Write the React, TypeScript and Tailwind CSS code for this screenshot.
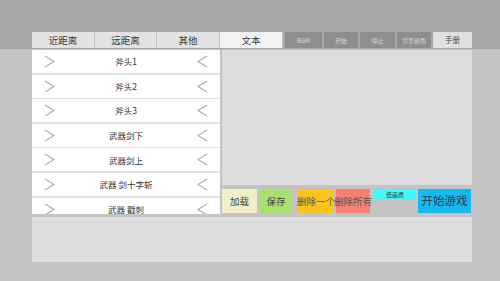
const font = { fontFamily: '"Noto Sans CJK SC", "Noto Sans", sans-serif' };

const mainTabs = [
  { label: '近距离', w: 'w-[63px]', active: false },
  { label: '远距离', w: 'w-[62px]', active: false },
  { label: '其他', w: 'w-[63px]', active: false },
  { label: '文本', w: 'w-[63px]', active: true },
];

const smallTabs = [
  { label: 'BGM', w: 'w-[37px]' },
  { label: '开始', w: 'w-[34px]' },
  { label: '停止', w: 'w-[35px]' },
  { label: '背景颜色', w: 'w-[34px]' },
];

const items = ['斧头1', '斧头2', '斧头3', '武器剑下', '武器剑上', '武器 剑十字斩', '武器 戳刺'];

function Chevron({ dir }: { dir: 'left' | 'right' }) {
  return (
    <svg width="11" height="13" viewBox="0 0 11 13" fill="none" stroke="#a8a8a8" strokeWidth={1.1}>
      {dir === 'right'
        ? <polyline points="1,1 10,6.5 1,12" />
        : <polyline points="10,1 1,6.5 10,12" />}
    </svg>
  );
}

export default function App() {
  return (
    <div className="w-[500px] h-[281px] bg-[#c4c4c4] overflow-hidden" style={font}>
      {/* top band with tabs */}
      <div className="h-[49px] bg-[#a8a8a8] pt-[32px] pl-[32px] flex">
        {mainTabs.map(t => (
          <div
            key={t.label}
            className={`${t.w} h-[16px] flex items-center justify-center text-[9.5px] text-[#3a3a3a] border-r border-[#c4c4c4] ${
              t.active ? 'bg-[#f2f2f2]' : 'bg-[#e2e2e2]'
            }`}
          >
            {t.label}
          </div>
        ))}
        <div className="flex gap-[2px] ml-[2px]">
          {smallTabs.map(t => (
            <div key={t.label} className={`${t.w} h-[16px] bg-[#8e8e8e] flex items-center justify-center text-[6px] text-[#d6d6d6]`}>
              {t.label}
            </div>
          ))}
          <div className="w-[39px] h-[16px] bg-[#e0e0e0] flex items-center justify-center text-[7.5px] text-[#444]">
            手册
          </div>
        </div>
      </div>

      {/* main area */}
      <div className="flex pl-[32px] pt-[1px] h-[164px]">
        <div className="w-[188px] h-[164px] overflow-hidden bg-[#e2e2e2] flex flex-col gap-[1.6px]">
          {items.map(it => (
            <div key={it} className="h-[23px] shrink-0 bg-white flex items-center justify-between px-[12px]">
              <Chevron dir="right" />
              <span className="text-[8.5px] text-[#333]">{it}</span>
              <Chevron dir="left" />
            </div>
          ))}
        </div>

        <div className="w-[250px] ml-[2px] flex flex-col">
          <div className="h-[135px] bg-[#dcdcdc]" />
          <div className="flex mt-[4px] h-[24px]">
            <div className="w-[35px] bg-[#f1efc7] flex items-center justify-center text-[9.5px] text-[#444]">加载</div>
            <div className="w-[32px] ml-[3px] bg-[#a9e16f] flex items-center justify-center text-[9.5px] text-[#444]">保存</div>
            <div className="w-[36px] ml-[6px] bg-[#fcc31f] flex items-center justify-center text-[9.5px] text-[#555] whitespace-nowrap">删除一个</div>
            <div className="w-[34px] ml-[2px] bg-[#fa8172] flex items-center justify-center text-[9.5px] text-[#555] whitespace-nowrap">删除所有</div>
            <div className="w-[42px] ml-[4px] flex flex-col">
              <div className="h-[10px] bg-[#3ef8fa] flex items-center justify-center text-[6px] text-[#333]">低画质</div>
            </div>
            <div className="w-[53px] ml-[2px] bg-[#17b9f2] flex items-center justify-center text-[11.5px] text-[#2a3a4a]">开始游戏</div>
          </div>
        </div>
      </div>

      {/* bottom panel */}
      <div className="ml-[32px] mt-[4px] w-[440px] h-[45px] bg-[#dddddd]" />
    </div>
  );
}
